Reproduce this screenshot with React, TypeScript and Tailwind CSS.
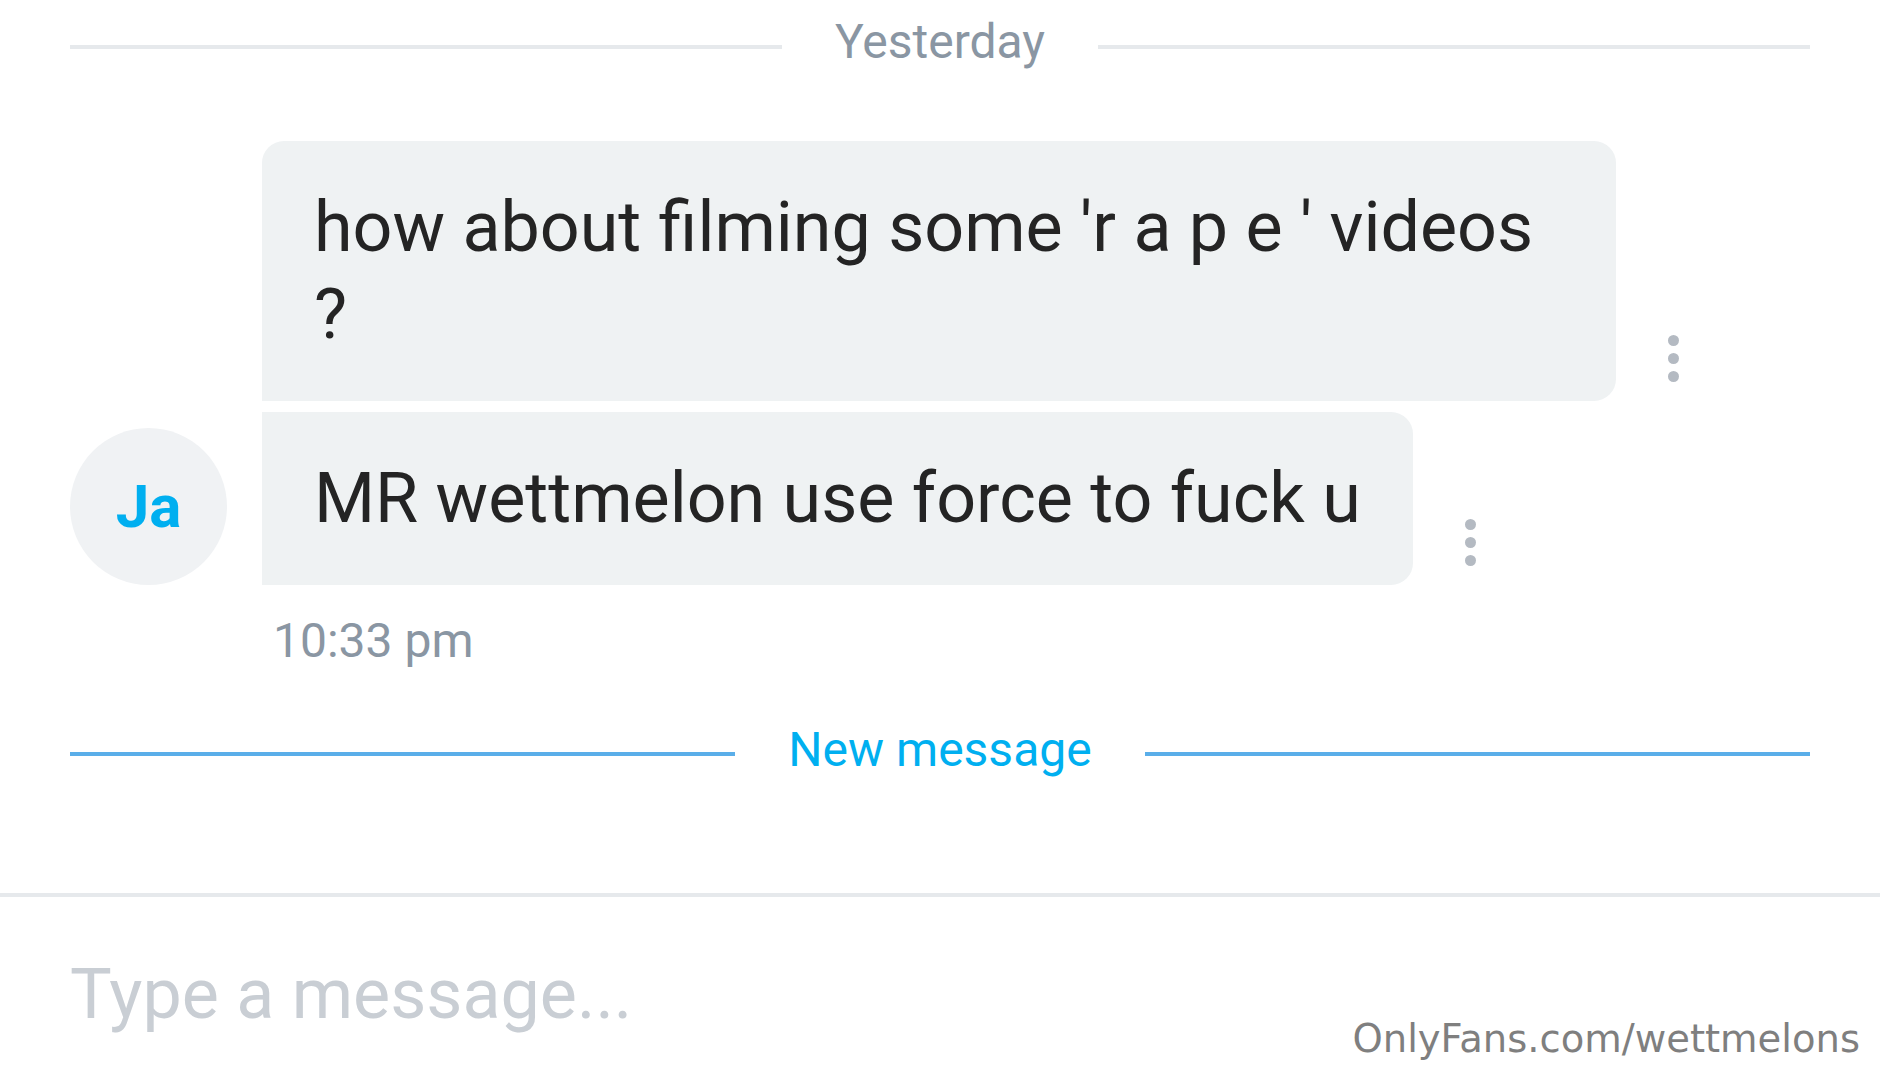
import { Fragment } from 'react';

interface ChatMessage {
  id: string;
  text: string;
  corners: string;
  wide?: boolean;
}

const messages: ChatMessage[] = [
  {
    id: 'm1',
    text: "how about filming some 'r a p e ' videos ?",
    corners: 'rounded-tl-[22px] rounded-tr-[22px] rounded-br-[22px]',
    wide: true,
  },
  {
    id: 'm2',
    text: 'MR wettmelon use force to fuck u',
    corners: 'rounded-tr-[22px] rounded-br-[22px]',
  },
];

function MoreDots() {
  return (
    <button className="mb-[19px] ml-[52px] flex flex-col gap-[7px]">
      <span className="block h-[11px] w-[11px] rounded-full bg-[#b4bac2]"></span>
      <span className="block h-[11px] w-[11px] rounded-full bg-[#b4bac2]"></span>
      <span className="block h-[11px] w-[11px] rounded-full bg-[#b4bac2]"></span>
    </button>
  );
}

function Divider({ label, blue }: { label: string; blue?: boolean }) {
  const line = blue ? 'mt-[30px] bg-[#5aaee9]' : 'mt-[31px] bg-[#e6e9ec]';
  return (
    <div className="flex items-start gap-[53px]">
      <div className={`h-[4px] flex-1 ${line}`}></div>
      <span className={`text-[48px] leading-[56px] ${blue ? 'text-[#00aff0]' : 'text-[#8a96a3]'}`}>
        {label}
      </span>
      <div className={`h-[4px] flex-1 ${line}`}></div>
    </div>
  );
}

export default function App() {
  return (
    <div
      className="relative h-[1080px] w-[1880px] overflow-hidden bg-white"
      style={{ fontFamily: 'Roboto, "Noto Sans", sans-serif' }}
    >
      <div className="px-[70px] pt-[14px]">
        <Divider label="Yesterday" />

        {/* 메시지 묶음 */}
        <div className="mt-[71px] flex items-end gap-[35px]">
          <div className="flex h-[157px] w-[157px] shrink-0 items-center justify-center rounded-full bg-[#f0f2f4]">
            <span className="text-[60px] font-bold leading-none text-[#00aff0]">Ja</span>
          </div>
          <div className="flex flex-col gap-[11px]">
            {messages.map((m) => (
              <Fragment key={m.id}>
                <div className="flex items-end">
                  <div
                    className={`${m.wide ? 'max-w-[1354px]' : 'w-fit'} bg-[#eff2f3] px-[52px] py-[43px] text-[70px] leading-[87px] text-[#242424] ${m.corners}`}
                  >
                    {m.text}
                  </div>
                  <MoreDots />
                </div>
              </Fragment>
            ))}
          </div>
        </div>

        <div className="ml-[203px] mt-[28px] text-[48px] leading-[56px] text-[#8a96a3]">10:33 pm</div>

        <div className="mt-[53px]">
          <Divider label="New message" blue />
        </div>
      </div>

      <div className="mt-[115px] border-t-4 border-[#e6e9ec] px-[70px] pt-[56px]">
        <input
          type="text"
          placeholder="Type a message..."
          className="h-[82px] w-full bg-transparent text-[70px] leading-[82px] text-[#242424] outline-none placeholder:text-[#c9ced4]"
        />
      </div>

      <div
        className="absolute right-[20px] top-[1016px] text-[38.5px] leading-[46px] text-[#7f7f7f]"
        style={{ fontFamily: '"DejaVu Sans", sans-serif' }}
      >
        OnlyFans.com/wettmelons
      </div>
    </div>
  );
}
